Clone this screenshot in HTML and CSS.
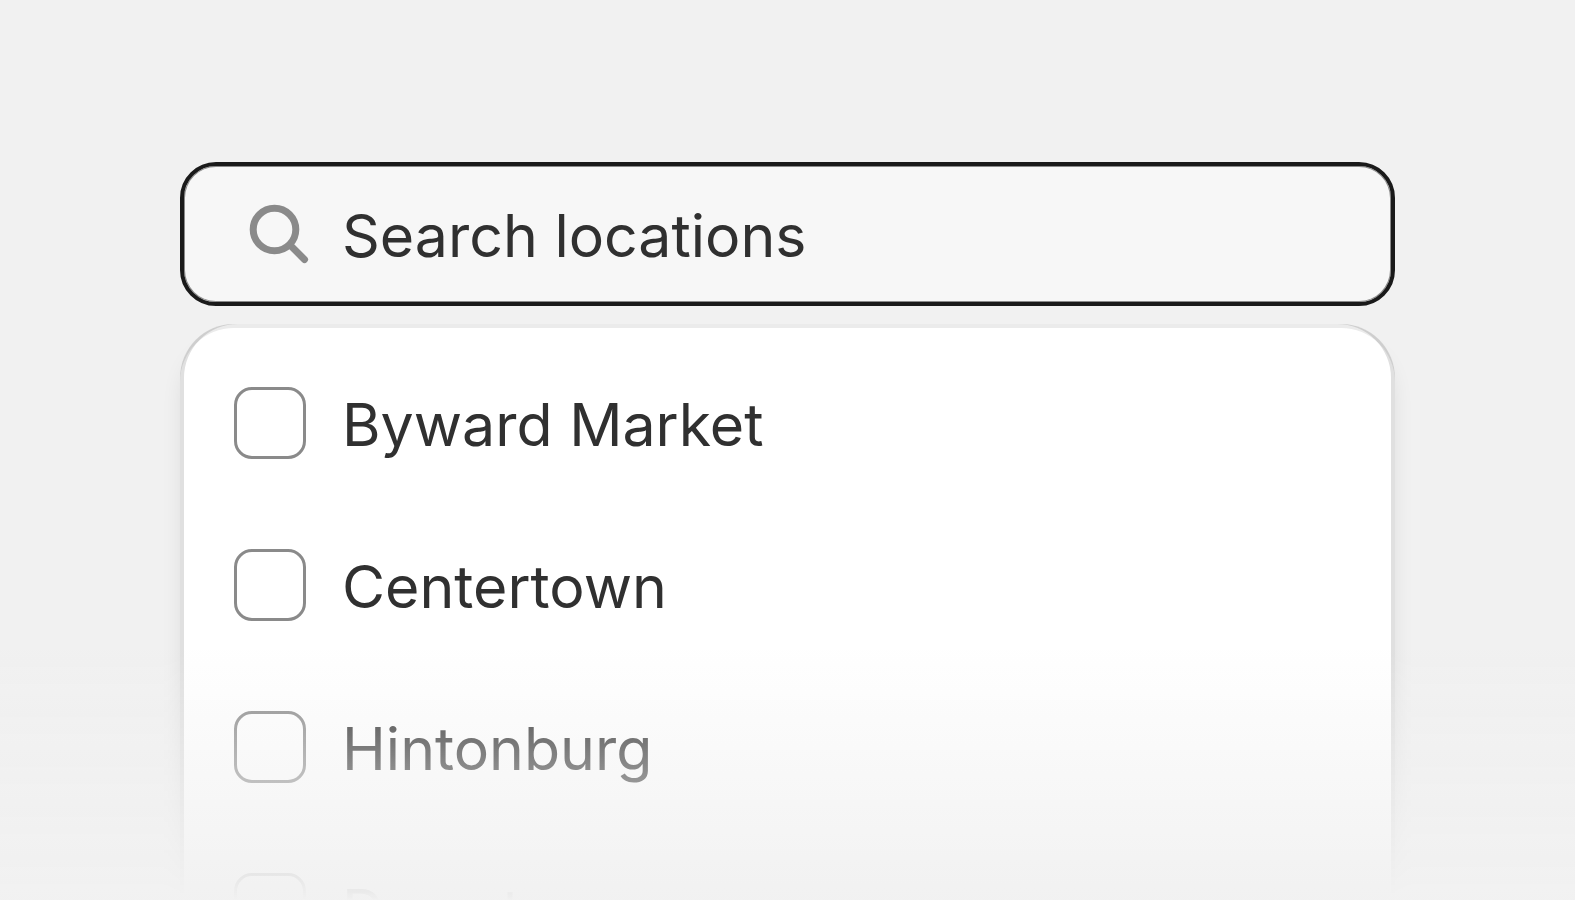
FILE: index.html
```html
<!DOCTYPE html>
<html lang="en">
<head>
<meta charset="utf-8">
<title>Locations</title>
<link rel="stylesheet" href="styles.css">
</head>
<body>
<main class="picker">
  <div class="search">
    <svg class="search-icon" viewBox="0 0 60 60" aria-hidden="true">
      <circle cx="25.5" cy="25.5" r="21.3"/>
      <path d="M41 41 55.5 55.5"/>
    </svg>
    <input class="search-input" type="text" placeholder="Search locations" aria-label="Search locations">
  </div>
  <div class="panel">
    <label class="option"><input class="checkbox" type="checkbox"><span>Byward Market</span></label>
    <label class="option"><input class="checkbox" type="checkbox"><span>Centertown</span></label>
    <label class="option"><input class="checkbox" type="checkbox"><span>Hintonburg</span></label>
    <label class="option"><input class="checkbox" type="checkbox"><span>Downtown</span></label>
  </div>
</main>
<div class="fade"></div>
</body>
</html>
```
FILE: styles.css
```css
* {
  box-sizing: border-box;
}

body {
  margin: 0;
  height: 100vh;
  overflow: hidden;
  background: #f1f1f1;
  color: #303030;
  font-family: Inter, "Liberation Sans", sans-serif;
  font-size: 59px;
  line-height: 68px;
}

.picker {
  display: flex;
  flex-direction: column;
  gap: 18px;
  padding: 162px 180px 0;
}

.search {
  display: flex;
  align-items: center;
  gap: 33px;
  padding: 32px 50px 32px 65px;
  border: 4px solid #1a1a1a;
  border-radius: 36px;
  background: #f7f7f7;
  box-shadow: inset 0 0 0 1px #8a8a8a;
}

.search-icon {
  flex: none;
  width: 60px;
  height: 60px;
  fill: none;
  stroke: #8a8a8a;
  stroke-width: 7;
  stroke-linecap: round;
}

.search-input {
  flex: 1;
  min-width: 0;
  height: 72px;
  padding: 3px 0 0;
  border: 0;
  outline: 0;
  background: none;
  color: inherit;
  font: inherit;
}

.search-input::placeholder {
  color: #303030;
  opacity: 1;
}

.panel {
  padding: 22px 54px;
  border-radius: 54px;
  background: #fff;
  box-shadow:
    inset 4px 0 0 rgb(0 0 0 / 12%),
    inset -4px 0 0 rgb(0 0 0 / 12%),
    inset 0 4px 0 rgb(204 204 204 / 40%),
    0 18px 27px -9px rgb(26 26 26 / 16%);
}

.option {
  display: flex;
  align-items: center;
  gap: 36px;
  padding: 41px 0 49px;
}

.option span {
  padding-top: 4px;
}

.checkbox {
  appearance: none;
  flex: none;
  width: 72px;
  height: 72px;
  margin: 0;
  border: 3px solid #8a8a8a;
  border-radius: 18px;
  background: #fff;
}

.fade {
  position: fixed;
  inset: auto 0 0;
  height: 250px;
  background: linear-gradient(rgb(241 241 241 / 0%), #f1f1f1);
}
```
